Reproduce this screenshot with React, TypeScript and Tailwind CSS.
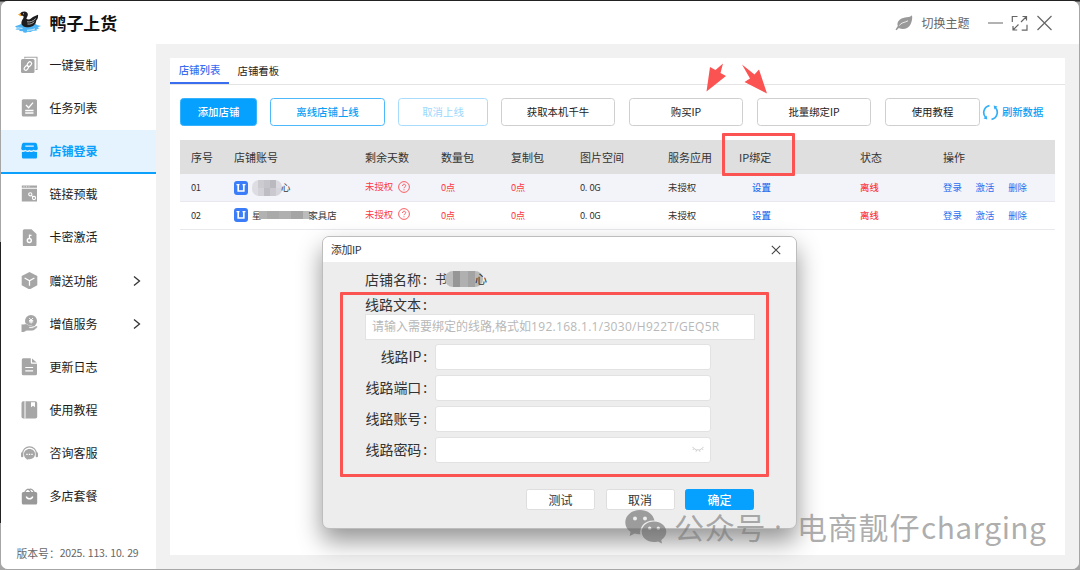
import React from "react";

const S = "http://www.w3.org/2000/svg";

const Logo = () => (
  <svg xmlns={S} viewBox="0 0 26 23" className="h-[23px] w-[26px] shrink-0">
    <path d="M0 15.300 4 14l4-2 12 .2 2 1.800 4 1-3.500 1.200 2 1-3 1 .5 1.300-4 .2-2.500 1.200-3-.2-1.500 1-2.500-.2-.5-1.300-4-.2 1-1.200-4.500-.4 1.500-1.400z" fill="#4db4f5" />
    <path d="M1.500 17.200c2-.8 4 .3 6 .1M12 19.400c2-.5 5 0 8-1.600" stroke="#fff" strokeWidth=".8" fill="none" />
    <path d="M3 3.600 5.500 2l1.700 2.500-1.800.7z" fill="#f5a623" />
    <path d="M5.300 2.500C6 .7 10-.5 12 1.500c1.800 2 .3 4.300-.7 6 1.200 1.400 3.400 1.200 5-.3C18.500 5.500 20.500 5 23 3.800c.4 2.600-.6 4.500-1.800 5.700 0 3.500-3 6.500-7.600 6.700-4 .2-7-1.200-7.200-4.200C6.200 9 9 7.500 8.600 5.500c-.3-1-1.500-1-2-.7z" fill="#1d1d1f" />
    <path d="M12 10.800c3 .5 6-.3 8.800-3.300M12.500 13c3 .4 5-.5 6.800-2.400" stroke="#bbb" strokeWidth=".9" fill="none" />
    <circle cx="8.500" cy="2.800" r=".5" fill="#fff" />
  </svg>
);

const icons: Record<string, React.ReactNode> = {
  copy: (
    <>
      <path d="M3.800 2.500V1.200h12.200v12.300h-1.500" fill="none" stroke="#a6a6a6" strokeWidth="1.100" />
      <rect x="0" y="3" width="13.500" height="14" rx="1.500" />
      <g fill="none" stroke="#fff" strokeWidth="1.200">
        <rect x="5.900" y="6.400" width="5" height="3.400" rx="1.700" transform="rotate(-50 8.400 8.100)" />
        <rect x="2.800" y="10.300" width="5" height="3.400" rx="1.700" transform="rotate(-50 5.300 12)" />
      </g>
    </>
  ),
  task: (
    <>
      <rect x=".8" y=".2" width="15.200" height="17.300" rx="1.500" />
      <path d="M5 6l2.600 2.700L12 3.600M4.200 11.500h8.300M4.200 14h8.300" fill="none" stroke="#fff" strokeWidth="1.300" />
    </>
  ),
  store: (
    <>
      <path d="M3 .8h11c1.200 0 1.800.7 2 1.700l.8 4c-.1 1.300-1.200 1.800-2.200 1.800-1.300 0-1.700-.6-2.100-.6-.7 0-1 .8-2 .8s-1.500-.8-2-.8c-.6 0-1 .8-2 .8s-1.300-.8-2-.8c-.6 0-1 .6-2 .6C1.300 8.300.1 7.700.2 6.500l.7-4C1.200 1.400 2 .8 3 .8z" />
      <path d="M.9 9.800c1.200.4 2.500.2 3.400-.5 1.500 1 2.900 1 4.200.1 1.300.9 2.800.9 4.200-.1 1 .7 2.200.9 3.400.5v4.900c0 1.300-.6 1.900-1.800 1.900H2.700c-1.200 0-1.800-.6-1.800-1.900z" />
      <path d="M4.300 4.200h8.500" stroke="#e4f3fe" strokeWidth="1.300" />
    </>
  ),
  link: (
    <>
      <path d="M.8.6h15.200v2.200H.8zM.8 3.700h15.200V16.500H.8z" />
      <path d="M2.500 1.700h1M5 1.700h1M7.500 1.700h1" stroke="#fff" strokeWidth=".7" />
      <g fill="none" stroke="#fff" strokeWidth="1.100">
        <circle cx="9.300" cy="9.300" r="1.600" />
        <circle cx="13" cy="13" r="1.600" />
        <path d="M10.400 10.400l1.500 1.500" />
      </g>
    </>
  ),
  key: (
    <>
      <path d="M3.300.2h7.200l5 4.700v10.900a1.500 1.500 0 0 1-1.500 1.500H3.300a1.500 1.500 0 0 1-1.500-1.500V1.700A1.500 1.500 0 0 1 3.300.2z" />
      <circle cx="8.300" cy="11.500" r="2" fill="none" stroke="#fff" strokeWidth="1.400" />
      <path d="M8.500 9.800V5.600M8.500 6.300h2" stroke="#fff" strokeWidth="1.300" />
    </>
  ),
  cube: (
    <>
      <path d="M8.500 0 16.300 4v9.200l-7.800 4.300L.7 13.200V4z" />
      <path d="M3.600 6l4.900 2.800L13.400 6M8.500 8.800v5" fill="none" stroke="#fff" strokeWidth="1.300" />
    </>
  ),
  hand: (
    <>
      <circle cx="10" cy="6" r="6" />
      <path d="M.3 9.200h2.700c2-.7 3.500 0 4.700 1.200h2.800c1 .1 1.200 1.300.4 1.700H8.500l-.2.700h3.200L15 11c1-.4 1.900.5 1.200 1.300-1.600 2-3.500 3.500-5.200 3.500H5.500L2.200 17.500H.3z" stroke="#fff" strokeWidth=".4" />
      <path d="M8.200 3l1.900 2 1.900-2M10.100 5v3.500M8 5.600h4.200M8 6.900h4.200" fill="none" stroke="#fff" strokeWidth="1" />
    </>
  ),
  doc: (
    <>
      <path d="M2.300.2h7.500v4c0 1 .6 1.600 1.600 1.600h4.600v10a1.500 1.500 0 0 1-1.500 1.500H2.300A1.500 1.500 0 0 1 .8 15.800V1.700A1.500 1.500 0 0 1 2.300.2z" />
      <path d="M11 .6l4.700 4h-4.100c-.4 0-.6-.2-.6-.6z" />
      <path d="M4.300 9.500h7.800M4.300 12.800h7.800" stroke="#fff" strokeWidth="1.200" />
    </>
  ),
  book: (
    <>
      <rect x=".5" y=".2" width="15.700" height="17.300" rx="1.800" />
      <path d="M4 .2v17.300" stroke="#fff" strokeWidth="1" />
      <path d="M10 1.200h4v5l-2-1.400-2 1.400z" fill="#fff" />
    </>
  ),
  service: (
    <>
      <path d="M1.500 8.800a7 7 0 0 1 14 0" fill="none" stroke="#a6a6a6" strokeWidth="1.200" />
      <rect x="0" y="7.300" width="2.300" height="5" rx="1.100" />
      <rect x="14.700" y="7.300" width="2.300" height="5" rx="1.100" />
      <path d="M8.500 4c3.300 0 5.500 2.300 5.500 5.100 0 2.900-2.200 5.100-5.500 5.100-1 0-1.700 0-2.400.5l-.8-1C4 12.800 3 11.200 3 9.200 3 6.400 5.200 4 8.500 4z" />
      <path d="M5.300 9.400h1.400M7.800 9.400h1.400M10.300 9.400h1.400" stroke="#fff" strokeWidth="1.300" />
    </>
  ),
  bag: (
    <>
      <path d="M3.500 4.500C5 2 6 1.200 7 1.200s1.800 1.200 3 3M7.500 2.200C9.500.6 11 .6 13.500 4.500" fill="none" stroke="#999" strokeWidth="1.200" />
      <rect x=".8" y="4" width="15.400" height="12.500" rx="1.500" fill="#999" />
      <path d="M5.300 8.500c.6 3 5.800 3 6.400 0" fill="none" stroke="#fff" strokeWidth="1.400" />
    </>
  ),
};

const menu: { icon: string; label: string; active?: boolean; more?: boolean }[] = [
  { icon: "copy", label: "一键复制" },
  { icon: "task", label: "任务列表" },
  { icon: "store", label: "店铺登录", active: true },
  { icon: "link", label: "链接预载" },
  { icon: "key", label: "卡密激活" },
  { icon: "cube", label: "赠送功能", more: true },
  { icon: "hand", label: "增值服务", more: true },
  { icon: "doc", label: "更新日志" },
  { icon: "book", label: "使用教程" },
  { icon: "service", label: "咨询客服" },
  { icon: "bag", label: "多店套餐" },
];

const Sidebar = () => (
  <aside className="flex w-[155px] shrink-0 flex-col bg-white">
    {menu.map((m) => (
      <div
        key={m.label}
        className={
          "flex h-[43.2px] items-center border-b-2 pl-[19.500px] text-[12px] " +
          (m.active ? "border-[#0aa0fb] bg-[#e4f3fe] font-bold text-[#0aa0fb]" : "border-transparent text-[#1c1c1c]")
        }
      >
        <svg xmlns={S} viewBox="0 0 17 17.500" className="h-[17.500px] w-[17px]" fill={m.active ? "#0aa0fb" : "#a6a6a6"}>
          {icons[m.icon]}
        </svg>
        <span className="ml-[12px] w-[83px]">{m.label}</span>
        {m.more && (
          <svg xmlns={S} viewBox="0 0 8 12" className="mt-px h-3 w-2" fill="none" stroke="#333" strokeWidth="1.300">
            <path d="M1 1.500l5.500 4.500L1 10.500" />
          </svg>
        )}
      </div>
    ))}
    <div className="mt-auto flex h-[31px] items-center pl-[15.500px] text-[10.800px] leading-none text-[#666]">
      版本号：
      <span className="text-[10.500px] tracking-[-0.200px]">
        2025<i className="pr-[2.900px] not-italic">.</i>113<i className="pr-[2.900px] not-italic">.</i>10<i className="pr-[2.900px] not-italic">.</i>29
      </span>
    </div>
  </aside>
);

const Header = () => (
  <header className="flex h-[43px] shrink-0 items-center bg-white pl-[14px] pr-[26px]">
    <Logo />
    <span className="ml-[8.500px] text-[16.900px] font-bold text-[#111]">鸭子上货</span>
    <svg xmlns={S} viewBox="0 0 18 16" className="ml-auto h-4 w-[18px]" fill="#999">
      <path d="M17 .3C15 3 9 1.500 5 4.500 2.400 6.500 2 9 2.800 11L.5 14.500l1 .8 2.300-2.300c4 1.800 9 .9 11.400-3C17 7 17.600 3 17 .3z" />
      <path d="M4.500 10.500C6 7.300 9 8 13 5.800" stroke="#fff" strokeWidth=".8" fill="none" />
    </svg>
    <span className="ml-[8px] text-[12px] text-[#666]">切换主题</span>
    <svg xmlns={S} viewBox="0 0 66 18" className="ml-[17.500px] h-[18px] w-[66px]" fill="none" stroke="#666" strokeWidth="1.200">
      <path d="M1 9h15" />
      <path d="M30.500 2.500h-5.200v5.500M34.700 16.200h5.300v-5.500M34 8l5-5M35.500 2.500h4v4M31.500 10.500l-5 5M26 12v4h4.200" />
      <path d="M50.500 2l14 14M64.500 2l-14 14" />
    </svg>
  </header>
);

const btn = "flex h-7 items-center justify-center rounded-[3.500px] border text-[10.400px] leading-none";
const plain = " border-[#cfcfcf] bg-white text-[#222]";

const Toolbar = () => (
  <div className="flex h-[55.500px] items-center pl-[10px]">
    <button className={btn + " w-[77px] border-[#36b2fc] bg-[#06a0ff] font-medium text-white"}>添加店铺</button>
    <button className={btn + " ml-[13px] w-[115px] border-[#4db9fb] bg-white font-medium text-[#0b9ff5]"}>离线店铺上线</button>
    <button className={btn + " ml-[13px] w-[90px] border-[#a8dcfd] bg-white text-[#9bd8fd]"}>取消上线</button>
    <button className={btn + " ml-[13px] w-[114px]" + plain}>获取本机千牛</button>
    <button className={btn + " ml-[14px] w-[114px]" + plain}>购买IP</button>
    <button className={btn + " ml-[14px] w-[114px]" + plain}>批量绑定IP</button>
    <button className={btn + " ml-[14px] w-[95px]" + plain}>使用教程</button>
    <svg xmlns={S} viewBox="0 0 17 17" className="ml-[1.500px] h-[17px] w-[17px]" fill="none" stroke="#35b0f8" strokeWidth="1.700">
      <path d="M7.500 1.700A7 7 0 0 0 3.500 13.200" />
      <path d="M9.500 15.300A7 7 0 0 0 13.500 3.800" />
      <path d="M5.300 15.500 1.500 14.600 4.600 11.500zM11.700 1.500l3.800.9-3.100 3.100z" fill="#35b0f8" stroke="none" />
    </svg>
    <span className="ml-[3.500px] text-[10.300px] font-medium leading-none text-[#0b9ff5]">刷新数据</span>
  </div>
);

const cols = "grid grid-cols-[43px_131px_76px_70px_69px_88px_71px_121px_83px_1fr] items-center pl-[11px]";
const num = "text-[9.400px] tracking-[-0.500px]";

const ShopName = ({ second }: { second?: boolean }) => (
  <div className="flex items-center">
    <svg xmlns={S} viewBox="0 0 14 14" className="h-[14px] w-[14px]">
      <rect width="14" height="14" rx="3" fill="#3b7cf8" />
      <path d="M4.200 3.800v6.200h5.600V3.800" fill="none" stroke="#fff" strokeWidth="1.700" />
      <path d="M2.500 3.700h3M8.500 3.700h3" stroke="#fff" strokeWidth="1.300" />
    </svg>
    {second ? (
      <>
        <span className="ml-1">星</span>
        <span className="-ml-[2px] -mr-[2px] flex h-[8px] w-[51px]">
          <i className="w-2 bg-[#b2b2b2]" />
          <i className="w-3 bg-[#aaa]" />
          <i className="w-3 bg-[#b0b0b0]" />
          <i className="w-3 bg-[#a5a5a5]" />
          <i className="flex-1 bg-[#bcbcbc]" />
        </span>
        <span>家具店</span>
      </>
    ) : (
      <>
        <span className="ml-1 grid h-4 w-[30px] grid-cols-5 grid-rows-2 overflow-hidden rounded-[7px]">
          <i className="bg-[#dddde2]" /><i className="bg-[#cbcbd0]" /><i className="bg-[#c4c4ca]" /><i className="bg-[#b9b9bf]" /><i className="bg-[#dadae0]" />
          <i className="bg-[#dcdce2]" /><i className="bg-[#d2d2d8]" /><i className="bg-[#bdbdc3]" /><i className="bg-[#c9c9cf]" /><i className="bg-[#d5d5db]" />
        </span>
        <span className="-ml-px">心</span>
      </>
    )}
  </div>
);

const Row = ({ no, second }: { no: string; second?: boolean }) => (
  <div className={cols + " h-[27.700px] border-b border-[#e8e8ee] text-[9.400px] leading-none text-[#333] " + (second ? "bg-white" : "bg-[#f3f3fa]")}>
    <span className={num}>{no}</span>
    <ShopName second={second} />
    <span className="-mt-[2px] flex items-center text-[#fb3b3f]">
      <span>未授权</span>
      <svg xmlns={S} viewBox="0 0 12 12" className="ml-[5px] h-3 w-3" fill="none" stroke="#fb4b4f" strokeWidth=".9">
        <circle cx="6" cy="6" r="5.400" />
        <path d="M4.500 5c0-2.400 3.200-2.200 3.200-.3C7.700 5.900 6 5.900 6 7.200M6 8.300v1" />
      </svg>
    </span>
    <span className="text-[#fb3b3f]"><span className={num}>0</span>点</span>
    <span className="text-[#fb3b3f]"><span className={num}>0</span>点</span>
    <span className={num}>0<i className="pr-[2.600px] not-italic">.</i>0G</span>
    <span>未授权</span>
    <span className="pl-[13px] font-medium text-[#1f6fee]">设置</span>
    <span className="font-medium text-[#fb3b3f]">离线</span>
    <span className="flex gap-[13.800px] text-[#1f6fee]">
      <span>登录</span><span>激活</span><span>删除</span>
    </span>
  </div>
);

const heads = ["序号", "店铺账号", "剩余天数", "数量包", "复制包", "图片空间", "服务应用", "IP绑定", "状态", "操作"];

const Main = () => (
  <main className="flex-1 bg-[#f1f1f1] pl-[14px] pr-[14px] pt-[14px]">
    <section className="h-[497px] bg-white">
      <div className="flex h-[26.500px] border-b border-[#e4e4e4] text-[10.400px]">
        <div className="flex w-[59px] items-center justify-center border-b-[2.500px] border-[#3b6df0] font-medium text-[#3b6df0]">店铺列表</div>
        <div className="ml-[8.500px] flex items-center text-[#222]">店铺看板</div>
      </div>
      <Toolbar />
      <div className="ml-[10px] w-[875px]">
        <div className={cols + " h-[34.400px] bg-[#dfdfdf] text-[11px] leading-none text-[#333]"}>
          {heads.map((h) => (
            <span key={h}>{h}</span>
          ))}
        </div>
        <Row no="01" />
        <Row no="02" second />
      </div>
    </section>
  </main>
);

const Field = ({ label, eye }: { label: string; eye?: boolean }) => (
  <div className="flex h-[30.800px] items-center">
    <span className="-mt-[2px] w-[70px] shrink-0 whitespace-nowrap pr-[2px] text-right tracking-[-0.100px]">{label}<span className="ml-[2px] mr-[6px]">:</span></span>
    <div className="flex h-[26px] w-[276px] items-center justify-end rounded-[3px] border border-[#e2e2e2] bg-white pr-[6px]">
      {eye && (
        <svg xmlns={S} viewBox="0 0 12 7" className="h-[7px] w-3" fill="none" stroke="#ccc" strokeWidth=".9">
          <path d="M.5.800C3 5 9 5 11.500.800M2 2.500.8 4M4.500 4 4 5.800M7.500 4 8 5.800M10 2.500l1.200 1.500" />
        </svg>
      )}
    </div>
  </div>
);

const dbtn = "flex h-[21px] w-[69px] items-center justify-center rounded-[2.500px] border text-[12px] leading-none";

const Dialog = () => (
  <div className="absolute left-[322px] top-[236px] h-[293px] w-[475px] overflow-hidden rounded-[7px] border border-[#bdbdbd] bg-[#ededed] text-[14px] leading-none text-[#333] shadow-[0_12px_24px_rgba(0,0,0,0.42)]">
    <div className="flex h-[25px] items-center justify-between bg-white pl-[8px] pr-[15px] text-[10.800px] tracking-[-0.300px]">
      <span className="-mt-px">添加IP</span>
      <svg xmlns={S} viewBox="0 0 10 10" className="h-[10px] w-[10px]" stroke="#444" strokeWidth="1.100">
        <path d="M.8.800l8.400 8.400M9.200.800.8 9.200" />
      </svg>
    </div>
    <div className="pl-[42px] pt-[7px]">
      <div className="flex h-[20px] items-center">
        <span>店铺名称<span className="ml-[2px]">:</span></span>
        <span className="ml-[8px] text-[12px]">书</span>
        <span className="-ml-[2px] grid h-4 w-[38px] grid-cols-5 overflow-hidden rounded-[8px]">
          <i className="bg-[#bcbcbc]" /><i className="bg-[#969696]" /><i className="bg-[#b0b0b0]" /><i className="bg-[#a3a3a3]" /><i className="bg-[#b9b9b9]" />
        </span>
        <span className="-ml-[8px] text-[12px]">心</span>
      </div>
      <div className="mt-[6px] flex h-[18px] items-center"><span>线路文本<span className="ml-[2px]">:</span></span></div>
      <div className="mt-px flex h-[26px] w-[390px] items-center whitespace-nowrap border border-[#e2e2e2] bg-white pl-[6px] font-['Open_Sans','Noto_Sans_CJK_SC',sans-serif] text-[12px] text-[#b8b8b8]">
        <span>请输入需要绑定的线路,格式如<span className="tracking-[0.300px]">192.168.1.1/3030/H922T/GEQ5R</span></span>
      </div>
      <div className="mt-[2px]">
        <Field label="线路IP" />
        <Field label="线路端口" />
        <Field label="线路账号" />
        <Field label="线路密码" eye />
      </div>
      <div className="mt-[24px] flex gap-[10.500px] pl-[161px]">
        <button className={dbtn + " border-[#dedede] bg-white"}>测试</button>
        <button className={dbtn + " border-[#dedede] bg-white"}>取消</button>
        <button className={dbtn + " border-[#0aa0fb] bg-[#06a0ff] font-medium text-white"}>确定</button>
      </div>
    </div>
  </div>
);

const Watermark = () => (
  <div className="absolute left-[625px] top-[506px] flex h-[40px] items-center whitespace-nowrap text-[30px] leading-none text-[#777]/60">
    <svg xmlns={S} viewBox="0 0 42 35" className="h-[35px] w-[42px] text-[#666]/60" fill="currentColor">
      <path fillRule="evenodd" d="M15 1C6.500 1 .3 6.500.3 13.500c0 4 2 7 5.200 9.300L4.700 27l5-2.500c1.800.6 3.500.8 5.600.7C14 18 20 10.800 29.500 11.500 28 5 22 1 15 1zM10 7.500a2 2 0 1 1 0 4 2 2 0 0 1 0-4zm10 0a2 2 0 1 1 0 4 2 2 0 0 1 0-4z" />
      <path fillRule="evenodd" d="M29 12.500c-7 0-12.300 4.600-12.300 10.300S22 33 29 33c1.400 0 2.800-.2 4-.6l4 2.200-.7-3.700c3-2 5-4.700 5-8.100 0-5.700-5.500-10.300-12.300-10.300zM24.700 17.500a1.700 1.700 0 1 1 0 3.400 1.700 1.700 0 0 1 0-3.400zm8.600 0a1.700 1.700 0 1 1 0 3.400 1.700 1.700 0 0 1 0-3.400z" />
    </svg>
    <span className="ml-[7px] w-[100px] tracking-[0.800px]">公众号</span>
    <span className="w-[23px] font-['Open_Sans']">·</span>
    <span className="w-[124px] tracking-[0.800px]">电商靓仔</span>
    <span className="tracking-[0.400px]">charging</span>
  </div>
);

export default function App() {
  return (
    <div className="relative h-[570px] w-[1080px] overflow-hidden bg-gradient-to-b from-[#222] from-[1px] to-[#a6a6a6] to-[2px] pl-px pt-px font-['Noto_Sans_CJK_SC',sans-serif]">
      <div className="flex h-[568px] w-[1078px] flex-col overflow-hidden rounded-[7px] bg-[#f1f1f1]">
        <Header />
        <div className="flex min-h-0 flex-1">
          <Sidebar />
          <Main />
        </div>
      </div>
      <div className="absolute left-0 top-[242px] h-[281px] w-px bg-[#222]" />
      <div className="absolute left-[722px] top-[133px] h-[43px] w-[73px] rounded-[1px] border-3 border-[#fb5352]" />
      <svg xmlns={S} viewBox="0 0 64 32" className="absolute left-[705px] top-[62px] h-8 w-16" fill="#fb5352">
        <path d="M1.500 29.500 5 5l5.500 3 7.500-6.500-2.500 9.500 5.500 3z" />
        <path d="M37 2.500 49.500 12.500 54 7.500 62 31.500 39.500 20l5.500-3.500z" />
      </svg>
      <Dialog />
      <div className="absolute left-[340px] top-[292px] h-[185px] w-[429px] rounded-[1px] border-3 border-[#fb5352]" />
      <Watermark />
    </div>
  );
}
